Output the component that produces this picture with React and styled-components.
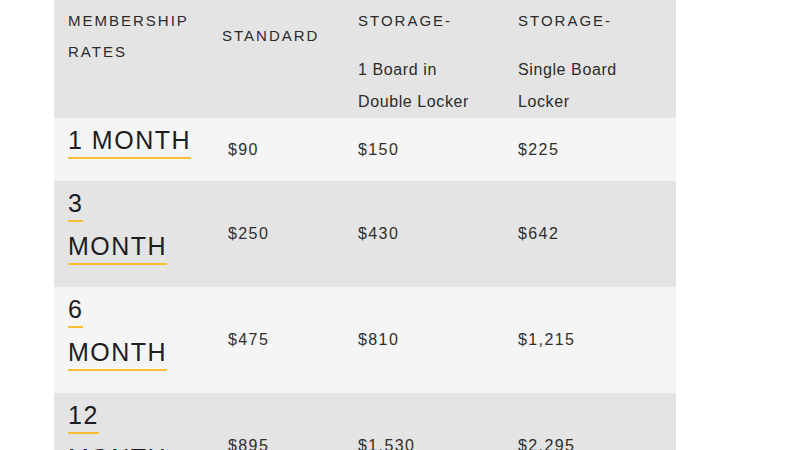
import React from 'react';
import styled, { createGlobalStyle } from 'styled-components';

const GlobalStyle = createGlobalStyle`
  body {
    margin: 0;
    background: #fff;
    font-family: "Liberation Sans", Arial, sans-serif;
  }
`

export const Page = styled.div`
  padding-left: 54px;
`

export const Table = styled.table`
  width: 622px;
  border-collapse: collapse;
  table-layout: fixed;
`
export const Thead = styled.thead`
  background: #e4e4e4;
`
export const Tbody = styled.tbody``
export const Tr = styled.tr`
  background: ${(props) => (props.shade ? '#e4e4e4' : '#f5f5f5')};
`
export const Th = styled.th`
  box-sizing: border-box;
  width: ${(props) => props.width};
  vertical-align: top;
  text-align: start;
  font-weight: normal;
  padding: ${(props) => props.top || 5}px 10px 0 ${(props) => props.left || 14}px;
  font-size: 15px;
  line-height: 31px;
  letter-spacing: 2px;
  color: #2b2b2b;
`
export const Sub = styled.div`
  margin-top: 18px;
  font-size: 16px;
  line-height: 32px;
  letter-spacing: 0.6px;
  color: #2b2b2b;
`
export const Label = styled.td`
  vertical-align: top;
  padding: 1px 10px 19px 14px;
  font-size: 25px;
  line-height: 43px;
  letter-spacing: 1.5px;
  color: #1c1c24;
`
export const Term = styled.span`
  padding-bottom: 3px;
  border-bottom: 2px solid #f6c131;
`
export const Td = styled.td`
  vertical-align: middle;
  padding: 0 10px 0 14px;
  font-size: 16px;
  letter-spacing: 1.4px;
  color: #2e2e2e;
`

const rows = [
  { num: '1', stacked: false, prices: ['$90', '$150', '$225'] },
  { num: '3', stacked: true, prices: ['$250', '$430', '$642'] },
  { num: '6', stacked: true, prices: ['$475', '$810', '$1,215'] },
  { num: '12', stacked: true, prices: ['$895', '$1,530', '$2,295'] },
]

export default function App() {
  return (
    <Page>
      <GlobalStyle />
      <Table>
        <Thead>
          <tr>
            <Th width="160px">MEMBERSHIP<br />RATES</Th>
            <Th width="130px" top={20} left={8}>STANDARD</Th>
            <Th width="160px">
              STORAGE-
              <Sub>1 Board in<br />Double Locker</Sub>
            </Th>
            <Th width="172px">
              STORAGE-
              <Sub>Single Board<br />Locker</Sub>
            </Th>
          </tr>
        </Thead>
        <Tbody>
          {rows.map((row, i) => (
            <Tr key={row.num} shade={i % 2 === 1}>
              <Label>
                <Term>
                  {row.num}
                  {row.stacked ? <br /> : ' '}
                  MONTH
                </Term>
              </Label>
              {row.prices.map((p) => (
                <Td key={p}>{p}</Td>
              ))}
            </Tr>
          ))}
        </Tbody>
      </Table>
    </Page>
  )
}
